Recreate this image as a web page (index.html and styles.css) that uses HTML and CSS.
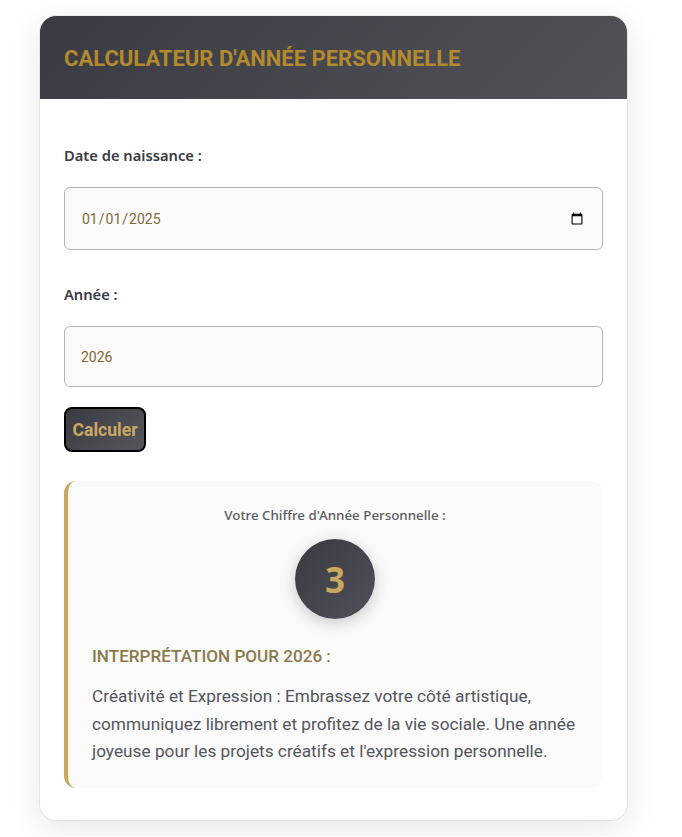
FILE: index.html
```html
<!DOCTYPE html>
<html lang="fr">
<head>
  <meta charset="UTF-8" />
  <meta name="viewport" content="width=device-width, initial-scale=1" />
  <title>Calculateur d'année personnelle</title>
  <link rel="stylesheet" href="styles.css">
</head>
<body>

  <div class="calc-card">
    <div class="calc-header">
      <h2>Calculateur d'année personnelle</h2>
    </div>

    <div class="calc-body">
      <label for="birthDate">Date de naissance :</label>
      <input type="date" id="birthDate" value="2025-01-01" />

      <label for="year">Année :</label>
      <input type="text" id="year" class="year-input" value="2026" />

      <button type="button" class="calc-btn">Calculer</button>

      <!-- Result -->
      <div class="result-box">
        <div class="result-title">Votre Chiffre d'Année Personnelle :</div>
        <div class="result-number">3</div>
        <h3>Interprétation pour 2026 :</h3>
        <p>Créativité et Expression : Embrassez votre côté artistique, communiquez librement et profitez de la vie sociale. Une année joyeuse pour les projets créatifs et l'expression personnelle.</p>
      </div>
    </div>
  </div>

</body>
</html>
```

FILE: styles.css
```css
body {
  font-family: Roboto, sans-serif;
  background: #fff;
  margin: 0;
  padding: 16px 55px 16px 40px;
}
.calc-card {
  background: #fff;
  border-radius: 16px;
  box-shadow: 0 0 0 1px rgba(0, 0, 0, 0.06), 0 8px 32px rgba(0, 0, 0, 0.1);
  overflow: hidden;
}
.calc-header {
  background: linear-gradient(135deg, #3a3a42, #525259);
  height: 83px;
  box-sizing: border-box;
  padding: 1px 24px 0;
  display: flex;
  align-items: center;
}
.calc-header h2 {
  margin: 0;
  color: #b38a2d;
  font-size: 22px;
  font-weight: 700;
  text-transform: uppercase;
}
.calc-body {
  padding: 46px 24px 32px;
}
label {
  display: block;
  font-family: "Noto Sans", sans-serif;
  font-size: 14.7px;
  font-weight: 600;
  line-height: 20px;
  color: #3a3a42;
  margin-bottom: 22px;
}
input {
  display: block;
  box-sizing: border-box;
  width: 100%;
  height: 63px;
  padding: 0 16px;
  margin-bottom: 34px;
  font-family: Roboto, sans-serif;
  font-size: 14px;
  color: #7d6a38;
  background: #fafafa;
  border: 1px solid #b5b5b5;
  border-radius: 6px;
}
input.year-input {
  height: 61px;
  margin-bottom: 20px;
}
.calc-btn {
  display: block;
  height: 45px;
  padding: 0 6.5px;
  font-family: Roboto, sans-serif;
  font-size: 17.6px;
  font-weight: 700;
  color: #c9a961;
  background: linear-gradient(135deg, #3a3a42, #56565d);
  border: 2px solid #000;
  border-radius: 8px;
}
.result-box {
  margin-top: 29px;
  padding: 26px 25px 22px 24px;
  background: #fafafa;
  border-left: 4px solid #c9a961;
  border-radius: 12px;
}
.result-title {
  font-family: "Noto Sans", sans-serif;
  font-size: 13.35px;
  font-weight: 500;
  line-height: 17px;
  color: #5c5c63;
  text-align: center;
}
.result-number {
  width: 80px;
  height: 80px;
  margin: 15px auto 0;
  border-radius: 50%;
  background: linear-gradient(135deg, #3a3a42, #50505a);
  box-shadow: 0 4px 16px rgba(0, 0, 0, 0.2);
  color: #c9a961;
  font-family: "Noto Sans", sans-serif;
  font-size: 35px;
  font-weight: 700;
  display: flex;
  align-items: center;
  justify-content: center;
}
.result-box h3 {
  margin: 27px 0 0;
  font-size: 17.1px;
  font-weight: 500;
  line-height: 20px;
  color: #8b7a4a;
  text-transform: uppercase;
}
.result-box p {
  margin: 17px 0 0;
  font-size: 17.25px;
  line-height: 27.5px;
  color: #55555b;
}
```
